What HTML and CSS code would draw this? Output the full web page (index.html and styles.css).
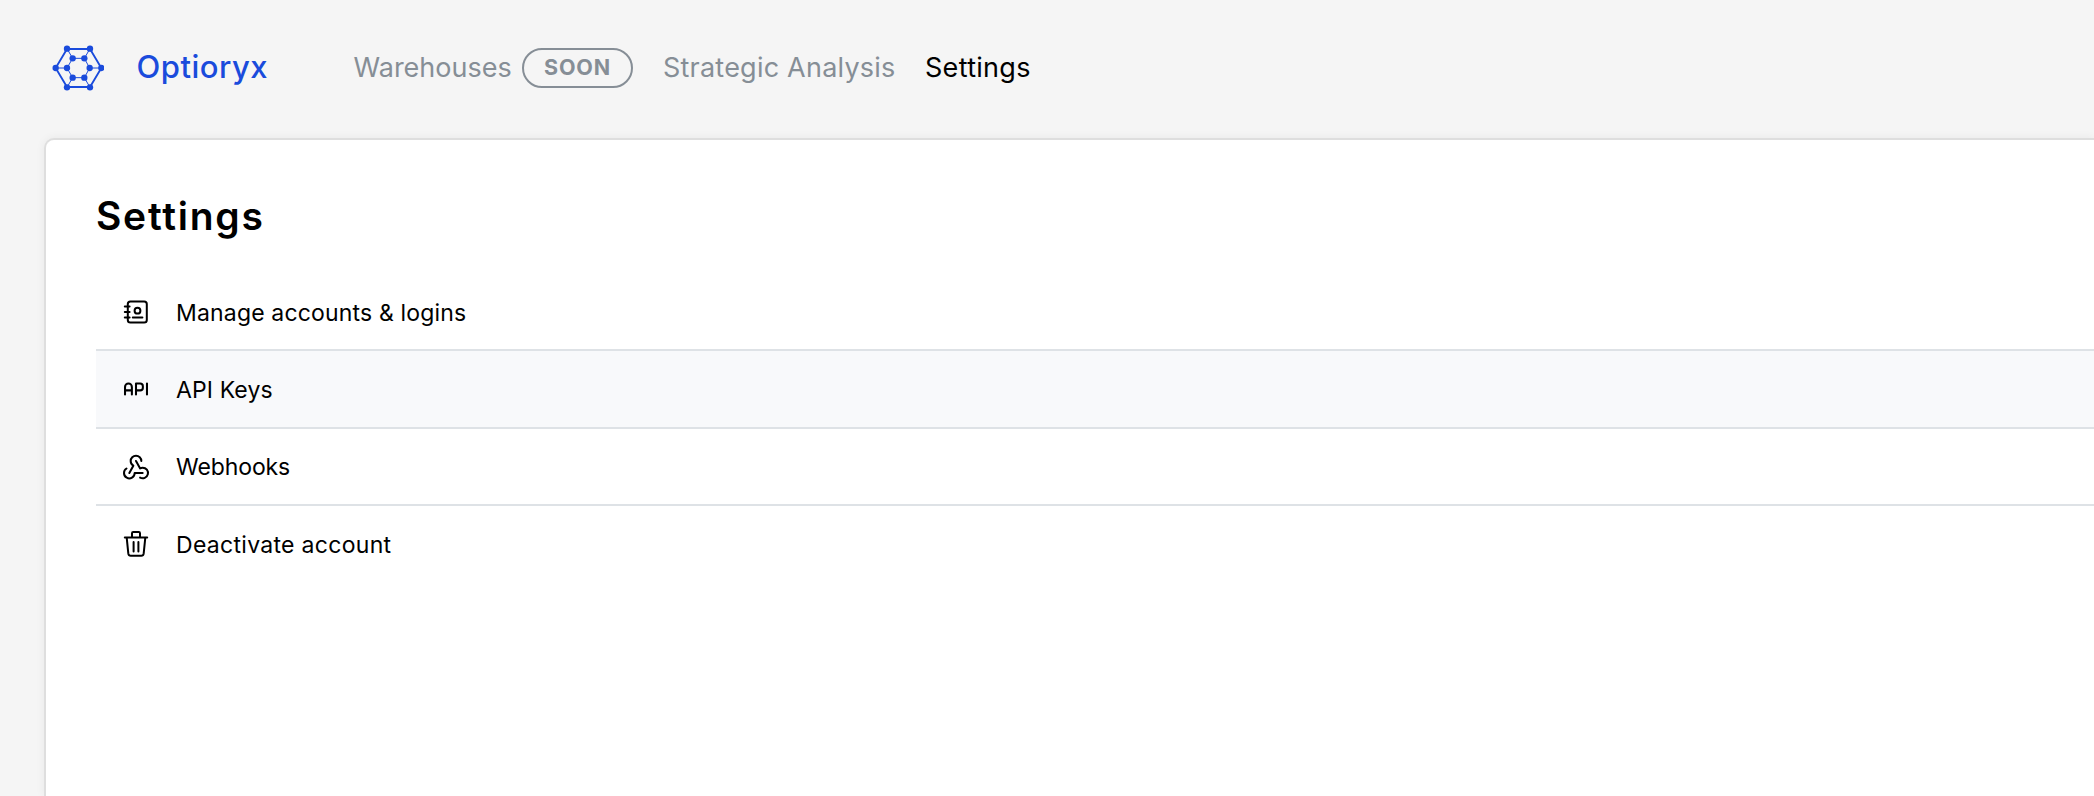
FILE: index.html
```html
<!DOCTYPE html>
<html lang="en">
<head>
<meta charset="utf-8">
<title>Optioryx</title>
<link rel="stylesheet" href="styles.css">
</head>
<body>
<header class="topbar">
  <a class="brand">
    <svg class="logo" viewBox="36 42 156 144" fill="#1a4bdc" stroke="#1a4bdc">
      <path d="M47 114 81 57H150L184 114 150 171H81Z" fill="none" stroke-width="5.5"/>
      <path d="M81 56 98 85H133L150 56M133 85 149 114H184M149 114 133 143 150 172M133 143H98L81 172M98 143 81 114H47M81 114 98 85" fill="none" stroke-width="3"/>
      <g stroke="none">
        <circle cx="47" cy="114" r="9.5"/><circle cx="184" cy="114" r="9.5"/>
        <circle cx="81" cy="56" r="9.5"/><circle cx="150" cy="56" r="9.5"/>
        <circle cx="81" cy="172" r="9.5"/><circle cx="150" cy="172" r="9.5"/>
        <circle cx="98" cy="85" r="9.5"/><circle cx="133" cy="85" r="9.5"/>
        <circle cx="81" cy="114" r="9.5"/><circle cx="149" cy="114" r="9.5"/>
        <circle cx="98" cy="143" r="9.5"/><circle cx="133" cy="143" r="9.5"/>
      </g>
    </svg>
    <span class="brand-name">Optioryx</span>
  </a>
  <nav class="nav">
    <a class="nav-link warehouses">Warehouses</a>
    <span class="badge">SOON</span>
    <a class="nav-link strategic">Strategic Analysis</a>
    <a class="nav-link active">Settings</a>
  </nav>
</header>
<main class="card">
  <h1 class="title">Settings</h1>
  <ul class="menu">
    <li class="item">
      <svg class="icon" viewBox="0 0 28 28">
        <rect x="5.8" y="3.4" width="19" height="21.2" rx="2.6"/>
        <path d="M2.8 8.6H7.6M2.8 14H7.6M2.8 19.4H7.6M10.8 19.4H20.4"/>
        <circle cx="15.5" cy="12.7" r="2.9"/>
      </svg>
      <span class="label accounts">Manage accounts &amp; logins</span>
    </li>
    <li class="item hover">
      <svg class="icon" viewBox="1.8 1.8 20.4 20.4" stroke-width="1.5">
        <path d="M4 13h5M12 16V8h3a2 2 0 0 1 2 2v1a2 2 0 0 1-2 2h-3M20 8v8M9 16v-5.5a2.5 2.5 0 0 0-5 0V16"/>
      </svg>
      <span class="label keys">API Keys</span>
    </li>
    <li class="item short">
      <svg class="icon" viewBox="1.5 2 21 21" stroke-width="1.5">
        <path d="M4.876 13.61A4 4 0 1 0 11 17h6"/>
        <path d="M15.066 20.502A4 4 0 1 0 17 13c-.706 0-1.424.179-2 .5L12 8"/>
        <path d="M16 8a4 4 0 1 0-8 0c0 1.506.77 2.818 2 3.5L7 17"/>
      </svg>
      <span class="label hooks">Webhooks</span>
    </li>
    <li class="item">
      <svg class="icon" viewBox="0 0 28 28">
        <path d="M2.8 7.4H25.2M10 7V3.2Q10 2 11.2 2H16.8Q18 2 18 3.2V7M4.7 7.6 6.3 23.4Q6.6 25.8 8.8 25.8H19.2Q21.4 25.8 21.7 23.4L23.3 7.6M11.6 12V21.5M16.4 12V21.5"/>
      </svg>
      <span class="label deactivate">Deactivate account</span>
    </li>
  </ul>
</main>
</body>
</html>
```
FILE: styles.css
```css
* { box-sizing: border-box; }
html { overflow: hidden; }
body {
  display: flex;
  flex-direction: column;
  margin: 0;
  height: 796px;
  background: #f5f5f5;
  color: #000;
  font-family: Inter, "Liberation Sans", sans-serif;
  font-feature-settings: "calt" 0;
}
.topbar {
  display: flex;
  flex: none;
  align-items: center;
  height: 136px;
  padding-left: 52px;
  margin-bottom: 2px;
}
.brand { display: flex; align-items: center; gap: 32.5px; width: 301.5px; }
.logo { width: 52px; height: 48px; flex: none; }
.brand-name { font-size: 31px; font-weight: 500; color: #1a4bdc; line-height: 38px; padding-bottom: 2px; letter-spacing: .5px; }
.nav { display: flex; align-items: center; }
.nav-link { font-size: 27px; line-height: 40px; color: #868e96; white-space: nowrap; }
.warehouses { width: 168.5px; }
.badge {
  width: 111px;
  height: 40px;
  margin-right: 30px;
  border: 2px solid #868e96;
  border-radius: 20px;
  color: #868e96;
  font-size: 21.5px;
  font-weight: 700;
  line-height: 35px;
  letter-spacing: .8px;
  text-align: center;
}
.strategic { width: 262px; letter-spacing: .22px; }
.nav-link.active { color: #000; letter-spacing: .3px; }
.card {
  flex: 1;
  margin-left: 44px;
  padding: 50px 0 0 50px;
  border: 2px solid #dedede;
  border-width: 2px 0 0 2px;
  border-top-left-radius: 10px;
  background: #fff;
  box-shadow: 0 0 10px rgba(0, 0, 0, .06);
}
.title { margin: 0 0 33px; font-size: 39px; line-height: 52px; font-weight: 600; letter-spacing: 1.75px; }
.menu { margin: 0; padding: 0; list-style: none; }
.item {
  display: flex;
  align-items: center;
  gap: 26px;
  height: 78px;
  padding-left: 26px;
  border-bottom: 2px solid #dee2e6;
}
.item:first-child { height: 76px; }
.item.short { height: 77px; }
.item:last-child { height: 76px; border-bottom: 0; }
.hover { background: #f8f9fb; }
.icon { width: 28px; height: 28px; flex: none; fill: none; stroke: #000; stroke-linecap: round; stroke-linejoin: round; }
.icon:not([stroke-width]) { stroke-width: 2; }
.label { padding-top: 1px; font-size: 23px; line-height: 32px; white-space: nowrap; }
.accounts { letter-spacing: .17px; }
.keys { letter-spacing: .12px; }
.hooks { letter-spacing: -.1px; }
.deactivate { letter-spacing: .3px; }
```
